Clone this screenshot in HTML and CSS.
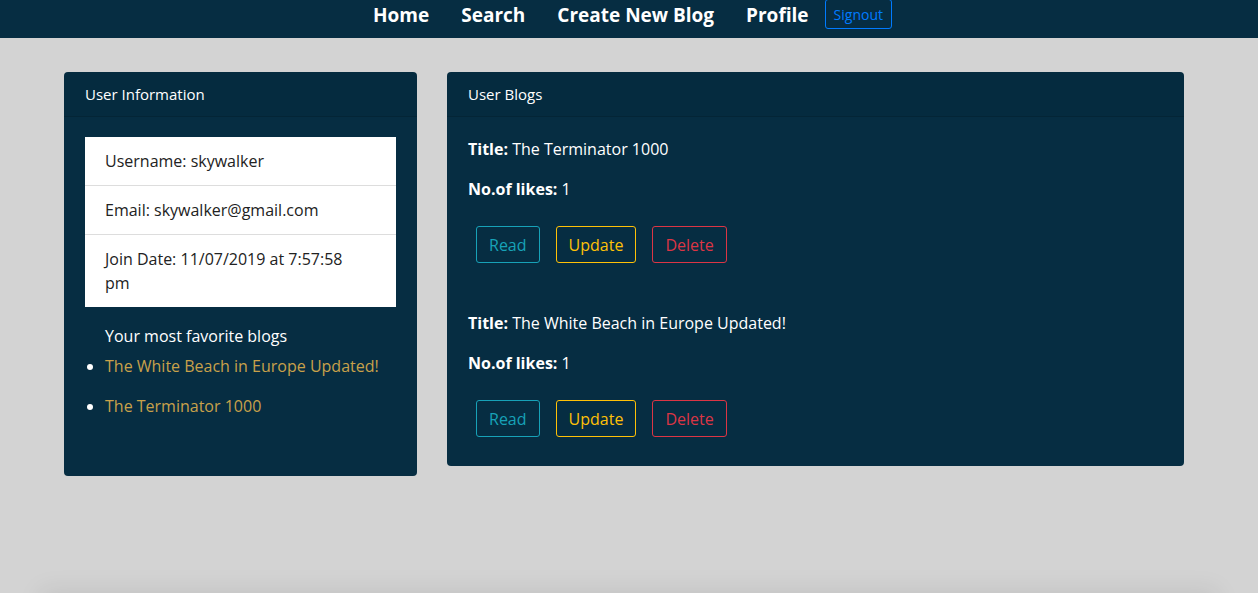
FILE: index.html
```html
<!DOCTYPE html>
<html>
<head>
<meta charset="utf-8">
<link rel="stylesheet" href="styles.css">
</head>
<body>
<nav class="navbar">
  <a class="nav-link" href="#">Home</a>
  <a class="nav-link" href="#">Search</a>
  <a class="nav-link" href="#">Create New Blog</a>
  <a class="nav-link" href="#">Profile</a>
  <button class="signout">Signout</button>
</nav>
<main class="container">
  <section class="card card-info">
    <div class="card-header">User Information</div>
    <div class="card-body">
      <ul class="list-group">
        <li class="list-item">Username: skywalker</li>
        <li class="list-item">Email: skywalker@gmail.com</li>
        <li class="list-item">Join Date: 11/07/2019 at 7:57:58 pm</li>
      </ul>
      <p class="fav-title">Your most favorite blogs</p>
      <ul class="fav-list">
        <li>The White Beach in Europe Updated!</li>
        <li>The Terminator 1000</li>
      </ul>
    </div>
  </section>
  <section class="card card-blogs">
    <div class="card-header">User Blogs</div>
    <div class="card-body">
      <div class="blog">
        <p class="line"><b>Title:</b> The Terminator 1000</p>
        <p class="line"><b>No.of likes:</b> 1</p>
        <div class="actions">
          <button class="btn btn-read">Read</button>
          <button class="btn btn-update">Update</button>
          <button class="btn btn-delete">Delete</button>
        </div>
      </div>
      <div class="blog">
        <p class="line"><b>Title:</b> The White Beach in Europe Updated!</p>
        <p class="line"><b>No.of likes:</b> 1</p>
        <div class="actions">
          <button class="btn btn-read">Read</button>
          <button class="btn btn-update">Update</button>
          <button class="btn btn-delete">Delete</button>
        </div>
      </div>
    </div>
  </section>
</main>
<div class="footer-shadow"></div>
</body>
</html>
```
FILE: styles.css
```css
* { box-sizing: border-box; }
html, body { margin: 0; padding: 0; }
body {
  background: #d3d3d3;
  font-family: "Open Sans", "Noto Sans", sans-serif;
  color: #fff;
  height: 593px;
  overflow: hidden;
}
.navbar {
  height: 38px;
  background: #062d42;
  display: flex;
  justify-content: center;
  align-items: flex-start;
  padding-right: 9px;
}
.nav-link {
  color: #fff;
  text-decoration: none;
  font-weight: 700;
  font-size: 19px;
  line-height: 30px;
  padding: 0 16px;
}
.signout {
  margin-top: -1px;
  height: 30px;
  padding: 0 8px;
  background: transparent;
  border: 1px solid #007bff;
  border-radius: 3px;
  color: #007bff;
  font-family: inherit;
  font-size: 14px;
}
.container {
  display: flex;
  align-items: flex-start;
  gap: 30px;
  padding: 34px 0 0 64px;
}
.card {
  background: #062d42;
  border-radius: 4px;
  overflow: hidden;
}
.card-info { width: 353px; }
.card-blogs { width: 737px; }
.card-header {
  padding: 0 21px;
  height: 45px;
  line-height: 45px;
  font-size: 15px;
  background: rgba(0,0,0,0.03);
  border-bottom: 1px solid rgba(0,0,0,0.13);
}
.card-body { padding: 20px 21px; }
.list-group {
  list-style: none;
  margin: 0;
  padding: 0;
  background: #fff;
  color: #222;
}
.list-item {
  padding: 12px 30px 12px 20px;
  font-size: 16px;
  line-height: 24px;
  border-bottom: 1px solid #ddd;
}
.list-item:last-child { border-bottom: 0; }
.fav-title {
  margin: 17px 0 0 20px;
  font-size: 16px;
  line-height: 24px;
}
.fav-list {
  margin: 6px 0 38px 0;
  padding: 0 0 0 20px;
  color: #c8a14a;
  font-size: 16px;
  line-height: 24px;
}
.fav-list li { margin-bottom: 16px; }
.fav-list li::marker { color: #fff; }
.blog + .blog { margin-top: 39px; }
.line {
  margin: 0 0 16px 0;
  font-size: 16px;
  line-height: 24px;
}
.line b { font-weight: 700; }
.actions {
  display: flex;
  gap: 16px;
  padding: 9px 8px;
}
.btn {
  height: 37px;
  padding: 0 12px;
  background: transparent;
  border: 1px solid;
  border-radius: 3px;
  font-family: inherit;
  font-size: 16px;
}
.btn-read { color: #17a2b8; border-color: #17a2b8; }
.btn-update { color: #ffc107; border-color: #ffc107; }
.btn-delete { color: #dc3545; border-color: #dc3545; }
.footer-shadow {
  margin: 122px 40px 0;
  height: 40px;
  background: #d3d3d3;
  box-shadow: 0 -8px 24px rgba(0,0,0,0.08);
}
```
